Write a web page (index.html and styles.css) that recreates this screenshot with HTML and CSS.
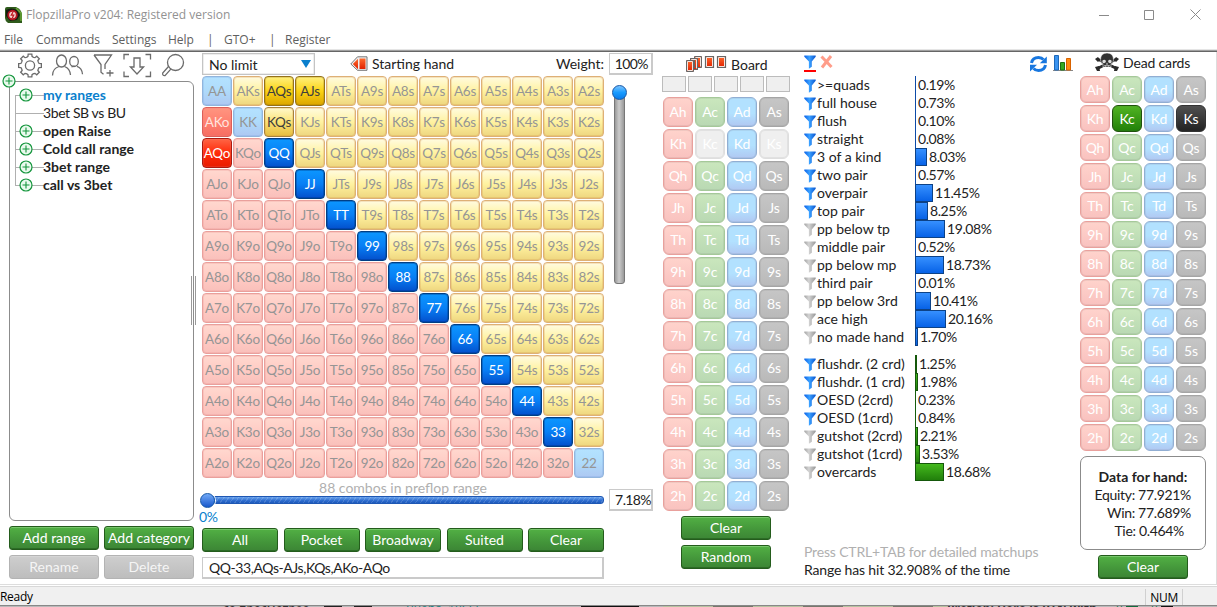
FILE: index.html
```html
<!DOCTYPE html>
<html lang="en">
<head>
<meta charset="utf-8">
<title>FlopzillaPro v204: Registered version</title>
<link rel="stylesheet" href="styles.css">
</head>
<body>
<svg class="defs" width="0" height="0">
  <defs>
    <linearGradient id="blueFill" x1="0" x2="1" y1="0" y2="0"><stop offset="0" stop-color="#0b62e8"/><stop offset=".45" stop-color="#3aa0ff"/><stop offset="1" stop-color="#0a55d0"/></linearGradient>
    <linearGradient id="greyFill" x1="0" x2="1" y1="0" y2="0"><stop offset="0" stop-color="#a4a4a4"/><stop offset=".4" stop-color="#d4d4d4"/><stop offset="1" stop-color="#979797"/></linearGradient>
    <linearGradient id="redFill" x1="0" x2="0" y1="0" y2="1"><stop offset="0" stop-color="#ff6a2c"/><stop offset="1" stop-color="#e02000"/></linearGradient>
    <symbol id="filter" viewBox="0 0 12 14"><path d="M.3.5h11.4v1.2L7.800 6.600v5.100L4.900 13.800V6.600L.3 1.700z"/></symbol>
    <symbol id="plus" viewBox="0 0 14 14"><circle cx="7" cy="7" r="6" fill="#eafaee" stroke="#14953c" stroke-width="1.2"/><path d="M7 3.500v7M3.500 7h7" stroke="#14953c" stroke-width="1.1" fill="none"/></symbol>
  </defs>
</svg>
<header class="titlebar">
  <svg class="app-icon" width="17" height="16" viewBox="0 0 17 16"><path d="M0 2Q0 0 2 0h9q5 2 6 7v9H3q-3-2-3-5z" fill="#2f5a1c"/><path d="M1 3Q6 0 12 3l3 5-3 5-7 1-4-5z" fill="#141b10"/><circle cx="7.500" cy="8" r="5.200" fill="#b31420"/><circle cx="7.500" cy="8" r="3.300" fill="#f3d5d2"/><path d="M8 5L6.300 8.200h2.400L7.300 11" stroke="#c01822" stroke-width="1.300" fill="none"/><path d="M11 1l5 5v8" stroke="#68a637" stroke-width="1.500" fill="none"/></svg>
  <span class="title">FlopzillaPro v204: Registered version</span>
  <svg class="window-buttons" width="110" height="12" viewBox="0 0 110 12" fill="none" stroke="#8a8a8a"><path d="M0 6.500h10M45.500 1.500h9v9h-9zM91.500.500l10 10M101.500.500l-10 10"/></svg>
</header>
<nav class="menu"><span class="m1">File</span><span class="m2">Commands</span><span class="m3">Settings</span><span class="m4">Help</span><span class="m5">|</span><span class="m6">GTO+</span><span class="m7">|</span><span>Register</span></nav>
<main class="workspace">
  <section class="ranges">
    <svg class="toolbar" width="185" height="28" viewBox="9 52 185 28" fill="none" stroke="#6b6b6b" stroke-width="1.300">
      <path id="gear"/><circle cx="30" cy="65.500" r="4.600"/>
      <ellipse cx="61.500" cy="61" rx="5" ry="6"/><path d="M52.500 75.500q0-7 6.500-9M64.500 66.500q5.500 2 6 8.500"/><ellipse cx="74" cy="61.500" rx="4.300" ry="5"/><path d="M71.500 67q1.500-.8 3-.8M77 66.300q5 1.500 5.500 8"/>
      <path d="M94 55h17.500l-6.500 9.500V69M94 55l7 9.500v7.700l2.500 2M110 70v6.500M106.500 73h7"/>
      <path d="M124 59.500V54.500h5M145.500 54.500h5v5M124 71.500v5h5M145.500 76.500h5v-5M134 58h6v9h3.600l-6.600 7-6.600-7h3.600z"/>
      <circle cx="175.500" cy="62.500" r="8"/><path d="M168.500 66.500l-5.800 6.500q-.5 3 2.500 2.500l5.600-6.400"/>
    </svg>
    <div class="tree">
      <svg class="root-node" width="14" height="14"><use href="#plus"/></svg>
      <div class="tree-item"><svg width="14" height="14"><use href="#plus"/></svg><b class="current">my ranges</b></div>
      <div class="tree-item leaf"><span>3bet SB vs BU</span></div>
      <div class="tree-item"><svg width="14" height="14"><use href="#plus"/></svg><b>open Raise</b></div>
      <div class="tree-item"><svg width="14" height="14"><use href="#plus"/></svg><b>Cold call range</b></div>
      <div class="tree-item"><svg width="14" height="14"><use href="#plus"/></svg><b>3bet range</b></div>
      <div class="tree-item"><svg width="14" height="14"><use href="#plus"/></svg><b>call vs 3bet</b></div>
      <i class="splitter"></i>
    </div>
    <div class="range-actions">
      <button class="btn">Add range</button><button class="btn">Add category</button>
      <button class="btn off">Rename</button><button class="btn off">Delete</button>
    </div>
  </section>

  <section class="preflop">
    <div class="preflop-head">
      <div class="combo">No limit<i class="caret"></i></div>
      <svg width="18" height="17" viewBox="0 0 18 17"><path d="M.8 8L7.500.8H17v13.500H7.500z" fill="#eee" stroke="#777"/><path d="M2.800 8L8 2.800v10.500z" fill="url(#redFill)"/><path d="M9.500 2.500h6v10.500h-6z" fill="url(#redFill)"/></svg>
      <span class="starting">Starting hand</span><span class="weight">Weight:</span>
    </div>
    <div class="field pct">100%</div>
    <div class="hands" id="hands"></div>
    <div class="vslider"><i class="vtrack"></i><i class="knob"></i></div>
    <div class="range-slider"><div class="combos">88 combos in preflop range</div><div class="htrack"><i class="knob deep"></i></div><div class="zero">0%</div></div>
    <div class="field pct second">7.18%</div>
    <div class="quick"><button class="btn">All</button><button class="btn">Pocket</button><button class="btn">Broadway</button><button class="btn">Suited</button><button class="btn">Clear</button></div>
    <div class="field range-text">QQ-33,AQs-AJs,KQs,AKo-AQo</div>
  </section>

  <section class="board">
    <div class="board-head"><svg width="42" height="18" viewBox="0 0 42 18" fill="url(#redFill)" stroke="#666"><path d="M9.500 1.500h7v11h-7zM5.500 3.500h7v11h-7z"/><path d="M10.500 2.500h5v9M6.500 13.500v-9h5v9" fill="none" stroke="#f3e5df"/><path d="M5.500 3.500h7v11h-7z" fill="none"/><path d="M1.500 5.500h7v11h-7z"/><path d="M20.500 1.500h8v11h-8zM32.500 1.500h8v11h-8z" stroke-width="1.200"/><path d="M2.500 6.500h5v9h-5zM21.500 2.500h6v9h-6zM33.500 2.500h6v9h-6z" fill="none" stroke="#f3e5df"/></svg><span>Board</span></div>
    <div class="slots"><i></i><i></i><i></i><i></i><i></i></div>
    <div class="cards" id="boardCards"></div>
    <button class="btn">Clear</button><button class="btn">Random</button>
  </section>

  <section class="stats">
    <div class="stats-head">
      <span class="active-filter"><svg width="12" height="14" fill="url(#blueFill)"><use href="#filter"/></svg></span>
      <svg class="cross" width="13" height="14" viewBox="0 0 13 14"><path d="M1.500 1.500l10 10.500M11 1L2 12.500" stroke="#ff9d8a" stroke-width="3" fill="none"/></svg>
      <svg width="19" height="18" viewBox="0 0 19 18"><path d="M2.500 8q1-5.500 7-5.500 3.300 0 5 2.200" fill="none" stroke="#1877df" stroke-width="3"/><path d="M17.800 1.500v6.800h-7z" fill="#1877df"/><path d="M16.500 10q-1 5.500-7 5.500-3.300 0-5-2.200" fill="none" stroke="#1877df" stroke-width="3"/><path d="M1 16.500V9.700h7z" fill="#1877df"/></svg>
      <svg class="chart" width="20" height="17" viewBox="0 0 20 17"><path d="M0 15.500h20" stroke="#888"/><path d="M1.500.500h4v14.500h-4z" fill="#3a93ef" stroke="#1d68ba"/><path d="M7.500 7.500h4V15h-4z" fill="#35a921" stroke="#1d7011"/><path d="M13.500 3.500h4V15h-4z" fill="#ff8a10" stroke="#d86200"/></svg>
    </div>
    <div id="made" class="group made"></div>
    <div id="draws" class="group draws"></div>
    <p class="hint">Press CTRL+TAB for detailed matchups</p>
    <p class="hit">Range has hit 32.908% of the time</p>
  </section>

  <section class="dead">
    <div class="dead-head"><svg width="24" height="19" viewBox="0 0 24 19"><path d="M2.500 6l19 9.500M21.500 6l-19 9.500" stroke="#292929" stroke-width="2.600"/><path d="M0 6l3-2 2 3-2 2zM24 6l-3-2-2 3 2 2zM0 14l4-1 1 5H2zM24 14l-4-1-1 5h3z" fill="#292929"/><path d="M5.500 7q0-7 6.500-7t6.500 7q0 3-2.500 4v3H8v-3Q5.500 10 5.500 7z" fill="#333" stroke="#fff" stroke-width=".5"/><path d="M7.500 7.500q2-1.500 3.500.5 0 2-2 2.200t-1.500-2.700zM16.500 7.500q-2-1.500-3.500.5 0 2 2 2.200t1.500-2.700zM12 9.500l1 2h-2z" fill="#ddd"/><path d="M9 12.500h6M10.500 12v2M13.500 12v2" stroke="#bbb" stroke-width=".7"/></svg><span>Dead cards</span></div>
    <div class="cards short" id="deadCards"></div>
    <div class="equity"><b>Data for hand:</b><span class="eq1">Equity: 77.921%</span><span class="eq2">Win: 77.689%</span><span class="eq3">Tie: 0.464%</span></div>
    <button class="btn">Clear</button>
  </section>
</main>
<footer class="status"><span>Ready</span><span class="num">NUM</span></footer>
<div class="behind"><i class="t1">со просмотрео</i><i class="k1"></i><i class="k1"></i><i class="t2">Buena, 18:33</i><i class="k2"></i><i class="felt"></i><i class="t3">Preflop: Hero is BTN with</i><i class="t4">8</i><i class="k3"></i><i class="t5">8</i><i class="k4"></i></div>
<script src="app.js"></script>
</body>
</html>
```
FILE: styles.css
```css
* { box-sizing: border-box; }
body { margin: 0; width: 1217px; height: 607px; overflow: hidden; background: #fff; color: #222; font: 14px/18px Lato, Carlito, sans-serif; display: flex; flex-direction: column; }
svg { display: block; flex: none; }
.defs { position: absolute; }
span, b, button { white-space: nowrap; }
.titlebar { height: 30px; display: flex; align-items: center; padding-left: 5px; font: 12px/16px "Open Sans", sans-serif; color: #929292; flex: none; }
.app-icon { margin-top: -1px; }
.title { margin-left: 4px; letter-spacing: -.17px; }
.window-buttons { margin-left: auto; margin-right: 8px; margin-top: -1px; }
.menu { height: 22px; flex: none; display: flex; padding: 2px 0 0 4px; font: 12px/16px "Open Sans", sans-serif; color: #606060; border-bottom: 1px solid #666; box-shadow: inset 0 -1px #a0a0a0, inset 0 -2px #e5e5e5; }
.title { letter-spacing: .01px; }
.m1 { width: 32px; } .m2 { width: 76px; } .m3 { width: 56px; } .m4 { width: 39px; } .m5 { width: 17px; } .m6 { width: 45px; } .m7 { width: 16px; }
.workspace { height: 532px; flex: none; display: flex; padding-left: 9px; border-right: 1px solid #ddd; }

.btn { font: inherit; font-size: 14px; line-height: 20px; height: 24px; width: 90px; padding: 0 0 1px; border: 1px solid #245c1c; border-radius: 3px; color: #fff; background: linear-gradient(#52b044, #43953a 60%, #3c8535); box-shadow: inset 0 1px #77c66b, inset 0 -1px #2c6b26; text-align: center; }
.btn.off { border-color: #b3b3b3; background: linear-gradient(#cecece, #bdbdbd); box-shadow: inset 0 1px #d5d5d5; color: #f5f5f5; }
.field { border: 2px solid #cacaca; border-top-width: 1px; border-left-width: 1px; height: 22px; background: #fff; line-height: 20px; }

.ranges { width: 193px; }
.toolbar { margin-bottom: 2px; }
.tree { position: relative; width: 185px; height: 440px; border: 1px solid #8c8c8c; border-radius: 6px; padding: 4px 0 0 5px; margin-top: -1px; }
.root-node { position: absolute; left: -8px; top: -8px; }
.tree-item { height: 18px; display: flex; align-items: center; padding-left: 4px; background: linear-gradient(#b0b0b0, #b0b0b0) 0 9px / 29px 1px no-repeat, linear-gradient(#b0b0b0, #b0b0b0) 0 0 / 1px 18px no-repeat; }
.tree-item:first-of-type { background: linear-gradient(#b0b0b0, #b0b0b0) 0 9px / 29px 1px no-repeat, linear-gradient(#b0b0b0, #b0b0b0) 0 9px / 1px 9px no-repeat; }
.tree-item:last-of-type { background: linear-gradient(#b0b0b0, #b0b0b0) 0 9px / 29px 1px no-repeat, linear-gradient(#b0b0b0, #b0b0b0) 0 0 / 1px 9px no-repeat; }
.tree-item svg + b { margin-left: 10px; }
.leaf span { margin-left: 24px; }
.leaf { letter-spacing: -.4px; }
.current { color: #0a7fcd; }
.splitter { position: absolute; right: -3px; top: 194px; width: 5px; height: 49px; border: solid #999; border-width: 0 1px; }
.range-actions { display: grid; grid-template-columns: 90px 90px; gap: 5px; margin-top: 5px; }

.preflop { width: 461px; display: grid; grid-template-columns: 402px 44px; column-gap: 5px; grid-template-rows: 23px 402px 50px 29px 22px; align-content: start; padding-top: 1px; }
.preflop-head { display: flex; align-items: center; height: 22px; }
.combo { width: 113px; height: 22px; border: 1px solid #c4c4c4; box-shadow: inset 0 0 0 .5px #ddd; padding-left: 6px; line-height: 21px; display: flex; align-items: center; justify-content: space-between; margin-right: 35px; }
.caret { border: 5px solid transparent; border-top: 8px solid #0a7fcd; border-bottom: 0; margin-right: 3px; }
.starting { margin-left: 4px; }
.weight { margin-left: auto; }
.pct { width: 44px; text-align: right; padding-right: 3px; letter-spacing: -.6px; }
.hands { display: grid; grid-template-columns: repeat(13, 30px); grid-auto-rows: 30px; gap: 1px; }
.hand { border: 1px solid; border-radius: 4px; text-align: center; line-height: 29px; font-size: 13.5px; letter-spacing: -.25px; color: #959595; overflow: hidden; white-space: nowrap; box-shadow: inset 0 0 0 1px rgba(200, 130, 60, .2); }
.suited { border-color: #deb076; background: linear-gradient(#fffbe0, #fff2a0 50%, #eed67f); }
.offsuit { border-color: #e9a09c; background: linear-gradient(#ffd8cf, #ffcac3 55%, #f9c0bb); box-shadow: inset 0 0 0 1px rgba(230, 130, 130, .2); }
.pair { border-color: #92b5dc; background: linear-gradient(#b4e2ff, #afdcfb 45%, #adc8f2); box-shadow: inset 0 0 0 1px rgba(80, 130, 210, .15); }
.pair.on { border-color: #003f85; color: #fff; background: linear-gradient(#0c97ff, #087ff5 50%, #0350cc); box-shadow: inset 0 0 0 1px rgba(0, 40, 110, .3); }
.suited.on { border-color: #94711b; color: #3e3e3e; background: linear-gradient(#fff07e, #fbd314 50%, #dca600); box-shadow: inset 0 0 0 1px rgba(130, 90, 0, .2); }
.suited.half { border-color: #a7823c; color: #3e3e3e; background: linear-gradient(#fff9cc, #fbe274 50%, #e5bd3f); }
.offsuit.on { border-color: #a91a10; color: #fff; background: linear-gradient(#ff6545, #ff2a09 50%, #e91b00); }
.offsuit.half { border-color: #dd5f59; color: #ffe4df; background: linear-gradient(#ff9580, #ff8070 50%, #f66d62); }
.vslider { position: relative; padding: 9px 0 0 3px; }
.vtrack { display: block; margin: 7px 0 0 2px; width: 11px; height: 192px; border: 1px solid #777; border-radius: 3px; background: linear-gradient(90deg, #999, #cbcbcb 45%, #999); }
.knob { position: absolute; left: 3px; top: 9px; width: 15px; height: 15px; border-radius: 50%; border: 1px solid #1557a7; background: linear-gradient(#7cc4ff, #189bff 50%, #087bea); }
.range-slider { position: relative; }
.combos { text-align: center; color: #b0b0b0; height: 18px; line-height: 19px; }
.htrack { position: relative; margin-left: 6px; height: 8px; border: 1px solid #1e57b3; border-radius: 3px; background: repeating-linear-gradient(125deg, #ffffff26 0 1px, transparent 1px 4px), linear-gradient(#6ba4ed, #2e6dcf 60%, #1d59bb); }
.knob.deep { left: -9px; top: -4px; background: linear-gradient(#72a9f7, #1959cc); box-shadow: 0 0 0 1px #fff; }
.zero { color: #0a7fcd; margin: 4px 0 0 -3px; letter-spacing: -.4px; }
.second { margin-top: 11px; padding-right: 0; }
.quick { grid-column: 1; display: flex; justify-content: space-between; }
.quick .btn { width: 76px; }
.range-text { grid-column: 1; padding-left: 6px; letter-spacing: -.43px; }

.board { width: 141px; display: flex; flex-direction: column; }
.board-head { height: 24px; padding: 3px 0 0 22px; display: flex; }
.board-head span { margin: 1px 0 0 4px; }
.slots { display: flex; gap: 2px; height: 16px; margin: 0 0 5px -1px; width: 128px; }
.slots i { width: 24px; border: 1px solid #bcbcbc; background: #efefef; }
.cards { display: grid; grid-template-columns: repeat(4, 30px); grid-auto-rows: 30px; gap: 2px; }
.short { grid-auto-rows: 27px; }
.card { border: 1px solid; border-radius: 6px; text-align: center; line-height: 28px; color: #fff; font-size: 14px; letter-spacing: -.2px; box-shadow: inset 0 0 0 1px rgba(90, 90, 90, .09); }
.short .card { line-height: 25px; }
.h { border-color: #e9a09c; background: linear-gradient(#ffd3cc, #f9c2bf); }
.c { border-color: #a5c999; background: linear-gradient(#cae7bd, #b9d9b3); }
.d { border-color: #91aed3; background: linear-gradient(#b2e1ff 55%, #b0c8f2); }
.s { border-color: #a5a5a5; background: linear-gradient(#c6c6c6, #b9b9b9); }
.used { border-color: #dedede; background: #efefef; }
.c.on { border-color: #20520d; background: linear-gradient(#51b423, #218008); }
.s.on { border-color: #333; background: linear-gradient(#505050, #222); }
.board .btn { margin: 5px 0 0 18px; flex: none; }

.stats { width: 275px; padding-left: 1px; display: flex; flex-direction: column; margin-left: -1px; flex: none; }
.stats-head { height: 24px; display: flex; padding-top: 3px; }
.active-filter { height: 17px; border-bottom: 2px solid red; margin-right: 4px; }
.cross { margin-right: 196px; }
.chart { margin-left: 5px; }
.stat { display: grid; grid-template-columns: 110px auto; height: 18px; }
.label { display: flex; align-items: center; gap: 1px; }
.label svg { margin-top: 1px; }
.value { display: flex; align-items: center; margin-left: 1px; border-left: 1px solid #0d4ba8; }
.bar { display: block; flex: none; height: 18px; border: 1px solid #0d4286; background: linear-gradient(#3690ff, #0762e7); margin-left: -1px; }
.value span { margin-left: 2px; letter-spacing: -.42px; }
.draws { margin-top: 9px; }
.draws .value { border-color: #155d0c; }
.draws .bar { border-color: #15580b; background: linear-gradient(#44b91d, #217f0b); }
.hint, .hit { margin: 0; letter-spacing: -.17px; }
.hint { margin-top: 62px; color: #b0b0b0; }

.dead { width: 128px; padding-left: 2px; }
.dead-head { height: 24px; padding: 1px 0 0 15px; display: flex; }
.dead-head span { margin: 1px 0 0 4px; letter-spacing: -.15px; }
.equity { height: 94px; width: 126px; margin-top: 5px; border: 1px solid #8b8b8b; border-radius: 7px; padding-top: 11px; display: flex; flex-direction: column; align-items: center; }
.equity span { letter-spacing: -.32px; }
.eq1, .eq2 { align-self: flex-end; margin-right: 14px; }
.eq3 { align-self: flex-end; margin-right: 21px; }
.dead .btn { display: block; margin: 5px 0 0 18px; }
.status { height: 21px; flex: none; border-top: 1px solid #ddd; box-shadow: inset 0 1px #fff, inset 0 2px #d8d8d8; background: #f0f0f0; display: flex; justify-content: space-between; align-items: flex-start; padding: 3px 34px 0 0; font: 12px/18px "Open Sans", sans-serif; color: #000; letter-spacing: -.3px; }
.num { border: solid #d0d0d0; border-width: 0 1px; padding: 0 4px; height: 16px; line-height: 17px; margin-top: 1px; }
.behind { height: 2px; overflow: hidden; background: #b9b9b9; border-top: 1px solid #888; display: flex; font: 12px/14px "Open Sans", sans-serif; color: #333; }
.behind i { flex: none; height: 14px; margin-top: -4px; font-style: normal; white-space: nowrap; }
.t1 { margin-left: 223px; width: 101px; }
.k1 { width: 18px; background: #222; margin-right: 12px; }
.t2 { color: #158080; margin-left: 22px; width: 175px; }
.k2 { width: 58px; background: #111; margin-right: 24px; }
.felt { width: 284px; background: repeating-linear-gradient(90deg, #b7c2a0 0 50px, #77786c 50px 90px); }
.t3 { font-weight: bold; width: 169px; }
.t4, .t5 { color: #137344; width: 10px; }
.k3 { width: 12px; background: #126b3d; margin-right: 13px; }
.k4 { width: 12px; background: #111; }
```
FILE: app.js
```js
const ranks = "AKQJT98765432";
const selected = { AQs: "on", AJs: "on", KQs: "half", AKo: "half", AQo: "on" };
document.getElementById("hands").innerHTML = [...ranks].map((a, r) => [...ranks].map((b, c) => {
  const kind = r === c ? "pair" : c > r ? "suited" : "offsuit";
  const name = kind === "pair" ? a + a : kind === "suited" ? a + b + "s" : b + a + "o";
  const state = kind === "pair" && r > 1 && r < 12 ? "on" : selected[name] || "";
  return `<div class="hand ${kind} ${state}">${name}</div>`;
}).join("")).join("");

const deck = (id, stateOf) => {
  document.getElementById(id).innerHTML = [...ranks].map(r => [..."hcds"].map(s =>
    `<div class="card ${s} ${stateOf(r + s)}">${r + s}</div>`).join("")).join("");
};
deck("boardCards", k => (k === "Kc" || k === "Ks" ? "used" : ""));
deck("deadCards", k => (k === "Kc" || k === "Ks" ? "on" : ""));

const rows = (id, list) => {
  document.getElementById(id).innerHTML = list.map(([label, pct, active]) => {
    const width = pct < 1 ? 0 : Math.max(2, Math.round(pct * 1.55));
    return `<div class="stat"><span class="label"><svg width="12" height="14" fill="url(#${active ? "blue" : "grey"}Fill)"><use href="#filter"/></svg>${label}</span>` +
      `<span class="value">${width ? `<i class="bar" style="width:${width}px"></i>` : ""}<span>${pct.toFixed(2)}%</span></span></div>`;
  }).join("");
};
rows("made", [["&gt;=quads", 0.19, 1], ["full house", 0.73, 1], ["flush", 0.1, 1], ["straight", 0.08, 1], ["3 of a kind", 8.03, 1], ["two pair", 0.57, 1], ["overpair", 11.45, 1], ["top pair", 8.25, 1], ["pp below tp", 19.08, 0], ["middle pair", 0.52, 0], ["pp below mp", 18.73, 0], ["third pair", 0.01, 0], ["pp below 3rd", 10.41, 0], ["ace high", 20.16, 0], ["no made hand", 1.7, 0]]);
rows("draws", [["flushdr. (2 crd)", 1.25, 1], ["flushdr. (1 crd)", 1.98, 1], ["OESD (2crd)", 0.23, 1], ["OESD (1crd)", 0.84, 1], ["gutshot (2crd)", 2.21, 0], ["gutshot (1crd)", 3.53, 0], ["overcards", 18.68, 0]]);

let outline = "";
for (let i = 0; i < 8; i++) {
  [[-0.36, 9], [-0.22, 9.3], [-0.16, 11.5], [0.16, 11.5], [0.22, 9.3], [0.36, 9]].forEach(([offset, radius], j) => {
    const a = i * Math.PI / 4 + offset;
    outline += `${i || j ? "L" : "M"}${30 + radius * Math.sin(a)} ${65.5 - radius * Math.cos(a)}`;
  });
}
document.getElementById("gear").setAttribute("d", outline + "z");
```
